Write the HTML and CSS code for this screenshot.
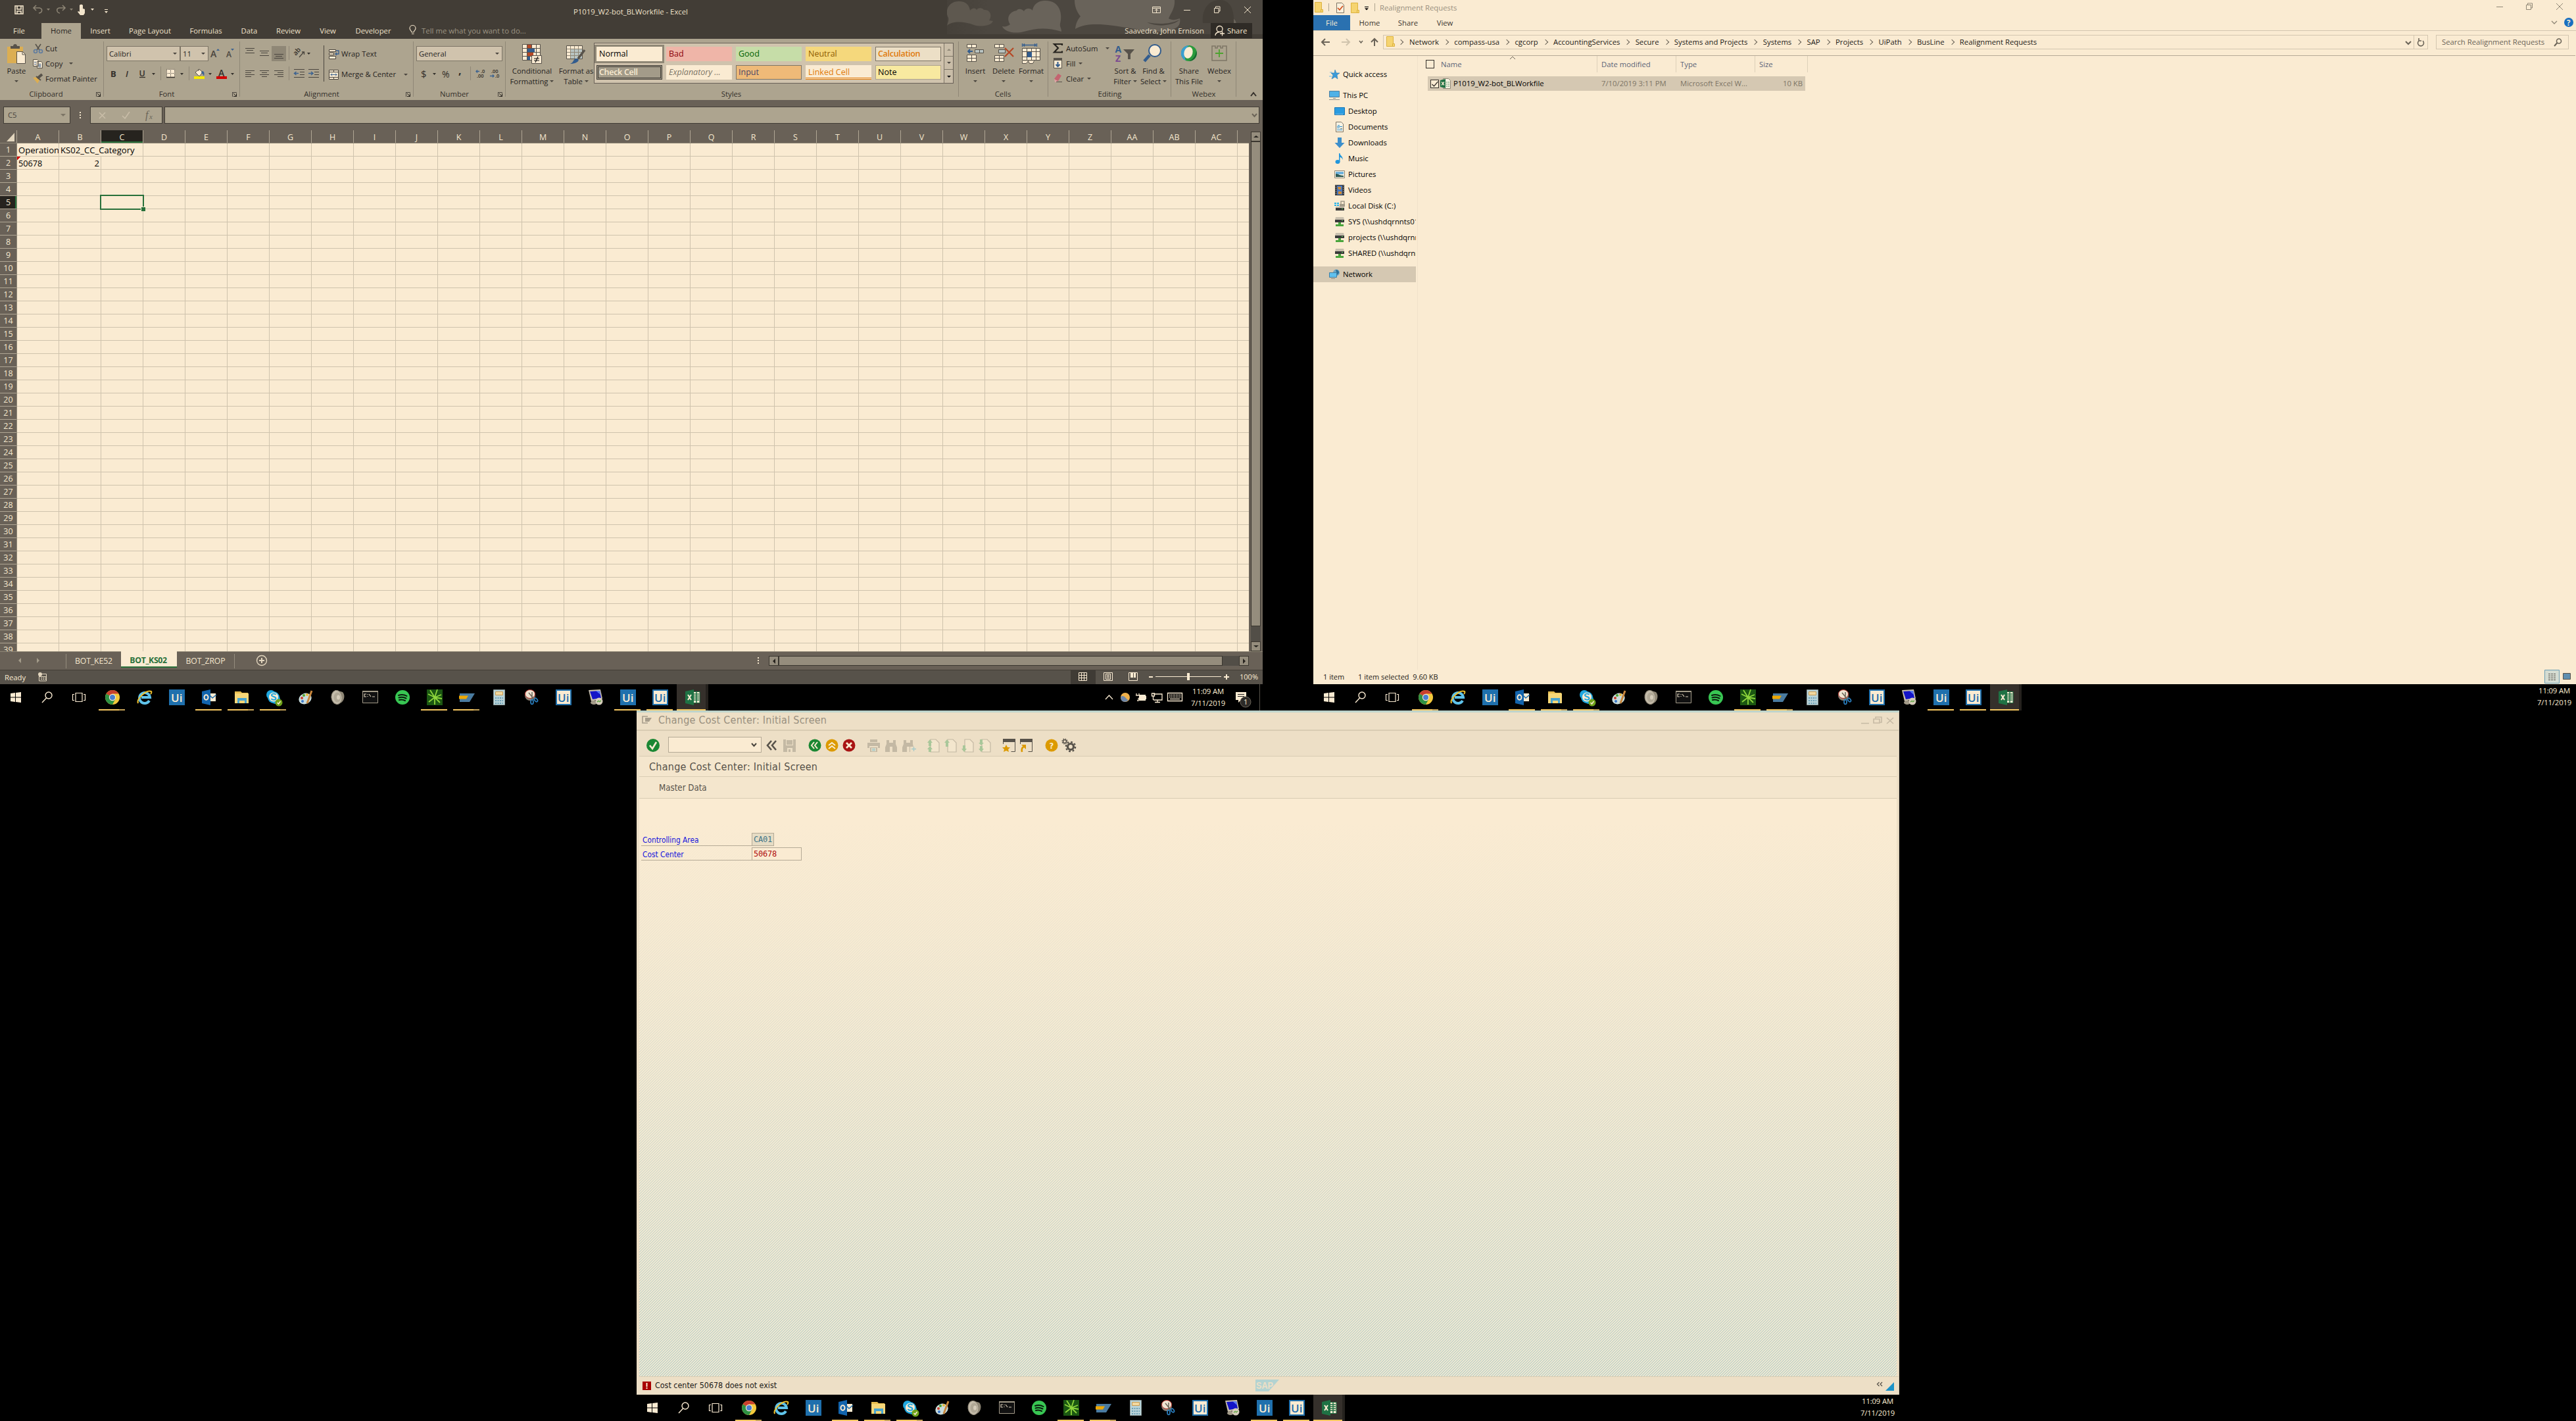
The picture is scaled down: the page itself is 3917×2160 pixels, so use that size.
FILE: index.html
```html
<!DOCTYPE html>
<html lang="en">
<head>
<meta charset="utf-8">
<title>Desktop</title>
<link rel="stylesheet" href="styles.css">
</head>
<body>
<main class="desk">

<!-- Excel -->
<section class="monitor mon-excel">
<div class="excel">
  <header class="xl-top">
    <svg class="xl-clouds" width="480" height="59" viewBox="1440 0 480 59">
      <defs><linearGradient id="cl" x1="0" x2="1"><stop offset="0" stop-color="#423d36"/><stop offset=".2" stop-color="#4c4740"/><stop offset="1" stop-color="#4c4740"/></linearGradient></defs>
      <path fill="url(#cl)" d="M1400 0h520v52h-520z"/>
      <g fill="#69635a">
        <path fill="#5e584f" d="M1440 39c1-5 3-7 2-12-6-10 0-25 16-25 11 0 16 6 17 14 3-4 8-5 10-1 3-4 9-3 11 0 10-1 13 9 8 16l6 1c-3 8-20 9-29 6-14-5-32-7-41 1z"/>
        <path d="M1524 40c3 8 18 12 33 8 18-5 34-7 57 0 0-5-3-8-2-12 4-14 0-35-22-35-14 0-19 8-20 15-4-5-11-3-13 1-4-4-9-4-11-1-12 2-16 12-10 21-4 3-8 4-12 3z"/>
        <path d="M1634 0h152c1 13-6 20-9 28 6 4 11 2 17 0 3 14-11 20-31 20-40 0-98-22-128-4 1-9 4-15 8-19-7-9-9-17-9-25z"/>
        <path d="M1856 36c2-8 8-10 12-10 8 0 11 5 12 10z"/>
      </g>
      <path d="M1744 34c18 3 34 3 50-4-10 9-34 12-50 4z" fill="#4c4740"/>
      <path d="M1829 35c-2-20 8-35 26-35 14 0 22 12 21 35z" fill="#443f38"/>
    </svg>
    <div class="xl-title">
      <svg width="180" height="30" viewBox="0 0 180 30" fill="none" stroke="#f3e5cc" stroke-width="1.6">
        <path d="M23 9h12v12H23zM26 9v5h6V9M26 21v-4h6v4"/>
        <g stroke="#8c8474"><path d="M51 12h9c5 1 5 7-1 8M55 8l-4 4 4 4M99 12h-9c-5 1-4 7 1 8M95 8l4 4-4 4"/></g>
        <path stroke="none" fill="#f3e5cc" d="M121 8a3 3 0 0 1 5 0v5l3 1v6l-2 3h-5l-4-5 1-1 2 1z"/>
        <path stroke="none" fill="#8c8474" d="M71 13h5l-2.500 3zM106 13h5l-2.500 3z"/>
        <path stroke="none" fill="#f3e5cc" d="M138 13h5l-2.500 3zM159 14h5v1h-5zM159 17h5l-2.500 3z"/>
      </svg>
      <span class="xl-name">P1019_W2-bot_BLWorkfile - Excel</span>
      <svg class="xl-win" width="180" height="30" viewBox="1740 0 180 30" fill="none" stroke="#f3e5cc" stroke-width="1">
        <path d="M1752.500 10.500h12v9h-12zM1752 12.500h12M1758.500 19v-5M1756 16l2.500-2 2.500 2M1800 15.500h10M1846.500 12.500h6.500v7h-6.500zM1848.500 12v-2h6.500v7h-2M1892 10l10 10M1902 10l-10 10"/>
      </svg>
    </div>
    <nav class="xl-tabs">
      <span>File</span><span class="on">Home</span><span>Insert</span><span>Page Layout</span><span>Formulas</span><span>Data</span><span>Review</span><span>View</span><span>Developer</span>
      <svg width="20" height="24" viewBox="0 0 20 24" fill="none" stroke="#e8dac2" stroke-width="1.200"><path d="M7 14c0-2-3-3-3-6a4.500 4.500 0 0 1 9 0c0 3-3 4-3 6zM7 16.500h3.500"/></svg>
      <span class="tell">Tell me what you want to do...</span>
      <span class="user">Saavedra, John Ernison</span>
      <span class="share"><svg width="16" height="18" viewBox="0 0 16 18" fill="none" stroke="#faebd2" stroke-width="1.300"><circle cx="7.500" cy="6" r="4.500"/><path d="M1 16c0-4 3-5 6-5.500M8 13h7M11.500 9.500v7"/></svg>Share</span>
    </nav>
  </header>

  <div class="ribbon">
    <div class="grp g-clip">
      <div class="big paste">
        <svg width="30" height="33" viewBox="12 66 30 33"><path fill="#dcae52" d="M13 71h24v25H13z"/><path fill="#57524a" d="M18 70h4c0-4 6-4 6 0h4v4H18z"/><path fill="#faebd2" stroke="#57524a" d="M27.500 78.500h9l4 4v14h-13z"/><path d="M36 78v5h5" fill="none" stroke="#57524a"/></svg>
        <b>Paste</b><i class="c"></i>
      </div>
      <div class="list">
        <span><svg width="16" height="16" fill="none" stroke="#57524a" stroke-width="1.600"><path d="M4 1l6 9M12 1L6 10"/><g stroke="#5d7ba0"><circle cx="4" cy="12" r="2.500"/><circle cx="12" cy="12" r="2.500"/></g></svg>Cut</span>
        <span><svg width="16" height="16" fill="#faebd2" stroke="#57524a"><path d="M.5 1.500h6l2 2v8h-8zM6.500 4.500h6l2 2v8h-8z"/><path stroke="#3b6291" d="M2 5.500h3M2 8.500h3M8.500 8.500h4M8.500 10.500h4M8.500 12.500h4"/></svg>Copy <i class="c"></i></span>
        <span><svg width="16" height="16"><path fill="#dcae52" d="M0 6l7-1 3 5-3 5z"/><path stroke="#57524a" stroke-width="4" d="M7 7l7-6"/><path stroke="#57524a" stroke-width="2" d="M5 4l7 6"/></svg>Format Painter</span>
      </div>
      <em>Clipboard</em><u class="ln"></u>
    </div>

    <div class="grp g-font">
      <div class="boxes"><span class="box b1">Calibri<i class="c"></i></span><span class="box b2">11<i class="c"></i></span>
        <svg width="42" height="24" viewBox="318 70 42 24" font-family="Open Sans, sans-serif" font-weight="600" fill="#4a453e"><text x="321" y="87" font-size="14">A</text><text x="345" y="87" font-size="12">A</text><path fill="#3b6291" d="M330 77l2.500-3 2.500 3zM352 74h5l-2.500 3z"/></svg></div>
      <svg class="r2" width="206" height="32" viewBox="158 98 206 32" font-family="Open Sans, sans-serif" fill="#332f2a">
        <text x="168" y="117" font-size="13" font-weight="700">B</text><text x="191" y="117" font-size="13" font-weight="600" font-style="italic">I</text><text x="211.500" y="116" font-size="12.500" font-weight="600">U</text><path d="M212 117.500h9" stroke="#332f2a" stroke-width="1.300"/>
        <path d="M231 111h5l-2.500 3zM274 111h5l-2.500 3zM317 111h5l-2.500 3zM351 111h5l-2.500 3z"/>
        <path d="M244.500 101v21M287.500 101v21" stroke="#8f8776"/>
        <path fill="#faebd2" d="M253 105h13v13h-13z"/><path fill="none" stroke="#332f2a" stroke-dasharray="1 1" d="M253.500 105v13M259.500 105v13M265.500 105v13M253 105.500h13M253 111.500h13"/><path d="M253 117.500h13" stroke="#332f2a" stroke-width="1.500"/>
        <path fill="#faebd2" stroke="#57524a" d="M297 110l6-5 5 5-5 6z"/><path d="M302 108v-3" stroke="#57524a"/><path fill="#3b6291" d="M307 108c4 0 4 4 3 8-1-3-2-4-4-5z"/><path fill="#f5ea00" d="M295 116h16v4h-16z"/>
        <text x="332" y="116" font-size="14" font-weight="600">A</text><path fill="#d20000" d="M329 116h16v4h-16z"/>
      </svg>
      <em>Font</em><u class="ln"></u>
    </div>

    <div class="grp g-align">
      <svg width="128" height="72" viewBox="365 59 128 72" fill="none" stroke="#4a453e" stroke-width="1">
        <path fill="#8f8776" stroke="none" d="M413 70h22v23h-22z"/>
        <path d="M373 73.500h14M375 76.500h10M373 80.500h14M395 77.500h14M397 80.500h10M395 84.500h14M417 82.500h14M419 85.500h10M417 88.500h14"/>
        <path d="M373 107.500h14M373 110.500h9M373 113.500h14M373 116.500h9M395 107.500h14M398 110.500h8M395 113.500h14M398 116.500h8M417 107.500h14M422 110.500h9M417 113.500h14M422 116.500h9"/>
        <path stroke="#8f8776" d="M439.500 70v21M439.500 101v21"/><path d="M492.500 69v55"/>
        <path stroke-width="1.300" d="M455 87l7-8M459 79h3.500v4"/><text x="0" y="0" transform="translate(450 85) rotate(-50)" font-size="10" font-family="Open Sans, sans-serif" font-weight="600" fill="#332f2a" stroke="none">ab</text>
        <path fill="#332f2a" stroke="none" d="M467 80h5l-2.500 3z"/>
        <path d="M447 105.500h16M456 109.500h7M456 113.500h7M447 117.500h16M469 105.500h16M478 109.500h7M478 113.500h7M469 117.500h16"/>
        <path stroke="#3b6291" stroke-width="1.500" d="M454 111.500h-6M450.500 109l-3 2.500 3 2.500M469 111.500h7M473 109l3 2.500-3 2.500"/>
      </svg>
      <div class="list wide">
        <span><svg width="17" height="17" fill="#faebd2" stroke="#4a453e"><path d="M.5 1.500h10v3H.500zM.5 6.500h7v3h-7zM.5 11.500h10v4H.500z"/><path fill="none" stroke="#3b6291" stroke-width="1.300" d="M11 3h4v5h-5M12 6l-2 2 2 2"/></svg>Wrap Text</span>
        <span><svg width="17" height="17" fill="#faebd2" stroke="#4a453e"><path d="M.5 1.500h14v14H.500zM.5 4.500h14M.5 12.500h14M7.500 1v3M7.500 13v3"/><path fill="none" stroke="#3b6291" d="M3 8.500h9M5 6.500l-2 2 2 2M10 6.500l2 2-2 2"/></svg>Merge &amp; Center<i class="c"></i></span>
      </div>
      <em>Alignment</em><u class="ln"></u>
    </div>

    <div class="grp g-num">
      <div class="boxes"><span class="box b3">General<i class="c"></i></span></div>
      <svg class="r2" width="138" height="32" viewBox="629 98 138 32" font-family="Open Sans, sans-serif" fill="#332f2a">
        <text x="640" y="118" font-size="15">$</text><path d="M658 111h5l-2.500 3z"/><text x="672" y="118" font-size="14">%</text><text x="697" y="113" font-size="16" font-weight="700">,</text>
        <path d="M715.500 101v21" stroke="#8f8776"/>
        <g font-size="7.500" font-weight="600"><text x="731" y="111">.0</text><text x="725" y="118">.00</text><text x="747" y="111">.00</text><text x="753" y="118">.0</text></g>
        <path fill="none" stroke="#3b6291" stroke-width="1.300" d="M729 108.500h-5M726 106.500l-2 2 2 2M745 115.500h6M749 113.500l2 2-2 2"/>
      </svg>
      <em>Number</em><u class="ln"></u>
    </div>

    <div class="grp g-styles">
      <div class="big w80"><svg width="32" height="33" viewBox="794 66 32 33"><path fill="#faebd2" stroke="#57524a" d="M795.500 67.500h27v24h-27zM802.500 67v24M809.500 67v24M816.500 67v24M795 73.500h27M795 79.500h27M795 85.500h27"/><path fill="#b54826" d="M803 68h6v5h-6zM803 80h9v5h-9z"/><path fill="#325c8e" d="M803 74h11v5h-11zM803 86h4v5h-4z"/><path fill="#faebd2" stroke="#57524a" d="M809.500 84.500h15v12h-15z"/><path stroke="#111" stroke-width="1.200" d="M813 89h8M813 92h8M819 86l-4 9"/></svg><b>Conditional<br>Formatting<i class="c in"></i></b></div>
      <div class="big w54"><svg width="32" height="33" viewBox="859 66 32 33"><path fill="#faebd2" stroke="#57524a" d="M860.500 69.500h24v20h-24z"/><path fill="#b9c4c2" d="M867 75h17v14h-17z"/><path fill="none" stroke="#8f8776" d="M866.500 70v19M872.500 70v19M878.500 70v19M861 74.500h23M861 79.500h23M861 84.500h23"/><path stroke="#57524a" stroke-width="3.500" d="M888 76l-10 13"/><path fill="#325c8e" d="M866 97c6-2 4-8 10-8 6 1 2 8-10 8z"/></svg><b>Format as<br>Table<i class="c in"></i></b></div>
      <div class="gallery">
        <div class="tiles">
          <span class="t normal">Normal</span><span class="t bad">Bad</span><span class="t good">Good</span><span class="t neutral">Neutral</span><span class="t calc">Calculation</span>
          <span class="t check">Check Cell</span><span class="t expl">Explanatory ...</span><span class="t input">Input</span><span class="t linked">Linked Cell</span><span class="t note">Note</span>
        </div>
        <div class="gscroll"><span><i class="c upc"></i></span><span><i class="c"></i></span><span class="more"><i class="c"></i></span></div>
      </div>
      <em>Styles</em>
    </div>

    <div class="grp g-cells">
      <div class="big w48"><svg width="32" height="33" viewBox="1467 66 32 33" fill="#faebd2" stroke="#57524a"><path d="M1470.500 67.500h14v5h-14zM1477.500 67v6M1470.500 83.500h14v10h-14zM1477.500 83v11M1470 88.500h14"/><path fill="#b9c4c2" d="M1482.500 75.500h13v5h-13zM1489.500 75v6"/><path fill="none" stroke="#325c8e" stroke-width="1.800" d="M1479 78h-7M1475 75l-3 3 3 3"/></svg><b>Insert</b><i class="c"></i></div>
      <div class="big w38"><svg width="32" height="33" viewBox="1509 66 32 33" fill="#faebd2" stroke="#57524a"><path d="M1511.500 67.500h14v5h-14zM1518.500 67v6M1511.500 84.500h14v9h-14zM1518.500 84v10M1511 88.500h14"/><path fill="#b9c4c2" d="M1517.500 75.500h10v5h-10z"/><path fill="none" stroke="#b54826" stroke-width="2.200" d="M1527 73l13 13M1540 73l-13 13"/></svg><b>Delete</b><i class="c"></i></div>
      <div class="big w46"><svg width="32" height="33" viewBox="1551 66 32 33" fill="#faebd2" stroke="#57524a"><path d="M1553.500 73.500h27v18h-27zM1560.500 73v18M1567.500 73v18M1574.500 73v18M1553 78.500h27M1553 86.500h27M1553.500 92.500v4h6l3-4 2 4h5l2-4"/><path fill="#325c8e" stroke="none" d="M1561 79h7v8h-7z"/><path fill="none" stroke="#325c8e" stroke-width="1.300" d="M1553.500 66v5M1575.500 66v5M1555 68.500h19M1557 66.500l-2 2 2 2M1572 66.500l2 2-2 2"/></svg><b>Format</b><i class="c"></i></div>
      <em>Cells</em>
    </div>

    <div class="grp g-edit">
      <div class="list">
        <span><svg width="17" height="17"><path fill="none" stroke="#26231e" stroke-width="2.200" d="M14 4V2H2l6 6-6 6.500h12v-2"/></svg>AutoSum<i class="c ml"></i></span>
        <span><svg width="17" height="17"><path fill="#faebd2" stroke="#57524a" d="M1.500.5h12v15h-12z"/><path fill="#57524a" d="M1 0h13v4H1z"/><path fill="none" stroke="#325c8e" stroke-width="2" d="M7.500 6v7M4.500 10l3 3 3-3"/></svg>Fill<i class="c in"></i></span>
        <span><svg width="17" height="17"><path fill="#c46470" d="M2 9l6-8 5 3-5 8-3 1z"/><path fill="#d9a3a3" d="M2 9l5 3-2 2H3z"/><path stroke="#57524a" d="M5 13.500h9"/></svg>Clear<i class="c in"></i></span>
      </div>
      <div class="big w44"><svg width="32" height="33" viewBox="1695 66 32 33" font-family="Open Sans, sans-serif" font-size="14" font-weight="700"><text x="1695.500" y="80" fill="#325c8e">A</text><text x="1696" y="94" fill="#7b4a91">Z</text><path fill="#57524a" d="M1708 75h17l-6 7v8h-4v-8z"/></svg><b>Sort &amp;<br>Filter<i class="c in"></i></b></div>
      <div class="big w42"><svg width="32" height="33" viewBox="1739 66 32 33"><path stroke="#325c8e" stroke-width="4.500" d="M1741 93l8-9"/><circle cx="1757" cy="77" r="9" fill="#faebd2" stroke="#325c8e" stroke-width="2"/></svg><b>Find &amp;<br>Select<i class="c in"></i></b></div>
      <em>Editing</em>
    </div>

    <div class="grp g-webex">
      <div class="big w54"><svg width="32" height="33" viewBox="1793 66 32 33"><ellipse cx="1809" cy="81" rx="12" ry="12" fill="#2a9a3c"/><path fill="#3a9fd0" d="M1809 69a12 12 0 0 0-5 23c-4-10 0-19 5-23z"/><path fill="#176030" d="M1809 93a12 12 0 0 0 11-16c-1 9-5 13-11 16z"/><ellipse cx="1808" cy="80" rx="6.500" ry="9" fill="#faebd2" transform="rotate(15 1808 80)"/></svg><b>Share<br>This File</b></div>
      <div class="big w38"><svg width="32" height="33" viewBox="1838 66 32 33"><path fill="none" stroke="#7d7566" stroke-width="1.500" d="M1843 70h5v3h3v-3h5v3h3v-3h6v22h-22z"/><path stroke="#4da32f" stroke-width="1.800" d="M1848 81h12M1854 75v12"/></svg><b>Webex</b><i class="c"></i></div>
      <em>Webex</em>
    </div>
    <svg class="fold" width="40" height="93" viewBox="1880 59 40 93"><path fill="none" stroke="#332f2a" stroke-width="2" d="M1902 146l4-5 4 5"/></svg>
  </div>

  <div class="fx">
    <span class="nm">C5<i class="c"></i></span>
    <svg width="30" height="26"><path fill="#f3e5cc" d="M14 8h2v2h-2zM14 12h2v2h-2zM14 16h2v2h-2z"/></svg>
    <span class="fxb"><svg width="108" height="24" fill="none" stroke="#c9bda8" stroke-width="1.600"><path d="M13 8l9 9M22 8l-9 9M48 13l4 4 7-10"/><text x="83" y="17" fill="#6b6458" stroke="none" font-family="Liberation Serif, serif" font-style="italic" font-size="16">f</text><text x="89" y="18" fill="#6b6458" stroke="none" font-family="Liberation Serif, serif" font-style="italic" font-size="11">x</text></svg></span>
    <span class="bar"><svg width="12" height="12" fill="none" stroke="#6b6458" stroke-width="2"><path d="M2 4l3.500 4 3.500-4"/></svg></span>
  </div>

  <div class="sheet">
    <div class="sheet-main">
      <div class="cols" id="cols"><span class="corner"><svg width="25" height="20"><path fill="#e3d6be" d="M22 4v13H10z"/></svg></span></div>
      <div class="sheet-body">
        <div class="rows" id="rows"></div>
        <div class="cells">
          <div class="row"><span class="cell clip">Operation</span><span class="cell span2">KS02_CC_Category</span></div>
          <div class="row"><span class="cell noted">50678</span><span class="cell num">2</span></div>
          <i class="sel"></i>
        </div>
      </div>
    </div>
    <div class="vs"><span class="sb"><i class="c upc"></i></span><span class="thumb"></span><span class="track"></span><span class="sb"><i class="c"></i></span></div>
  </div>

  <div class="tabs">
    <svg width="100" height="26"><path fill="#a39b89" d="M32 9v8l-4-4zM56 9v8l4-4z"/></svg>
    <span>BOT_KE52</span><span class="act">BOT_KS02</span><span class="z">BOT_ZROP</span>
    <svg class="plus" width="20" height="20" fill="none" stroke="#e3d6be" stroke-width="1.400"><circle cx="10" cy="10" r="7.500"/><path stroke-width="2" d="M10 6v8M6 10h8"/></svg>
    <svg class="dots" width="4" height="12"><path fill="#f3e5cc" d="M1 0h2v2H1zM1 4h2v2H1zM1 8h2v2H1z"/></svg>
    <div class="hs"><span class="sb"><i class="c lf"></i></span><span class="thumb"></span><span class="track"></span><span class="sb"><i class="c rt"></i></span></div>
  </div>
  <div class="status">
    <span>Ready</span>
    <svg width="14" height="14"><path fill="none" stroke="#e3d6be" d="M1.500 5v8h11V2.500H6M2 6.500h10M4 8.500h2m1 0h2m1 0h2M4 10.500h2m1 0h2m1 0h2"/><circle cx="3" cy="3" r="3" fill="#e3d6be"/></svg>
    <svg class="views" width="292" height="21" viewBox="1628 1019 292 21" fill="none" stroke="#faebd2">
      <path fill="#3f3b35" stroke="none" d="M1628 1019h38v21h-38z"/>
      <path d="M1640.500 1022.500h12v12h-12zM1644.500 1022v12M1648.500 1022v12M1640 1026.500h12M1640 1030.500h12M1678.500 1022.500h13v12h-13zM1681.500 1024.500h7v8h-7zM1683 1026.500h4M1683 1028.500h4M1683 1030.500h4M1716.500 1022.500h13v12h-13z"/>
      <path fill="#faebd2" stroke="none" d="M1719 1022h4v8h-4zM1724 1022h3v8h-3zM1747 1028h6v2h-6zM1757 1028h100v1h-100zM1805 1023h4v11h-4zM1861 1028h8v2h-8zM1864 1025h2v8h-2z"/>
      <text x="1885" y="1032.500" fill="#faebd2" stroke="none" font-family="Open Sans, sans-serif" font-size="11" textLength="28" lengthAdjust="spacingAndGlyphs">100%</text>
    </svg>
  </div>
</div>
<div class="taskbar" data-tray="full"></div>
</section>

<!-- File Explorer -->
<section class="monitor mon-files">
<div class="files">
  <div class="f-title">
    <svg width="96" height="23" viewBox="0 0 96 23"><g fill="#f6d470" stroke="#dcb23f"><path d="M2.500 3.500h10v15h-10zM57.500 4.500h10v15h-10z"/><path d="M11.500 14.500h3v4h-3zM66.500 15.500h3v4h-3z"/></g><path stroke="#aea48f" d="M23.500 5v12M93.500 5v12"/><path fill="#faf0dc" stroke="#7d7566" d="M35.500 4.500h8l3 3v12h-11z"/><path fill="none" stroke="#d2501e" stroke-width="1.700" d="M37 12l3 3 5-6"/><path d="M78 10h6v1h-6zM78 12.500h6l-3 3z"/></svg>
    <span>Realignment Requests</span>
    <svg class="right" width="130" height="23" viewBox="1790 0 130 23" fill="none" stroke="#8f8776"><path d="M1799 10.500h10M1844.500 7.500h7v7h-7zM1846.500 7v-2h7v7h-2M1890 5l10 10M1900 5l-10 10"/></svg>
  </div>
  <div class="f-tabs"><span class="file">File</span><span>Home</span><span class="sh">Share</span><span class="vw">View</span>
    <svg class="right" width="50" height="23" viewBox="1870 23 50 23" fill="none" stroke="#8f8776" stroke-width="1.300"><path d="M1883 32l4 4 4-4"/><circle cx="1909" cy="34" r="7" fill="#1a6fc0" stroke="none"/><text x="1906" y="38.500" fill="#faebd2" stroke="none" font-family="Open Sans, sans-serif" font-size="11.500" font-weight="700">?</text></svg></div>
  <div class="f-nav">
    <svg width="106" height="36" viewBox="0 47 106 36" fill="none" stroke="#6b6458" stroke-width="2"><path d="M13 64h12M18 59l-5 5 5 5M93 70V59M88 64l5-5 5 5"/><path stroke-width="1.500" d="M70 62l2.500 3 2.500-3"/><path stroke="#d0c4ad" d="M43 64h12M50 59l5 5-5 5"/></svg>
    <div class="addr">
      <svg width="22" height="20"><g fill="#f6d470" stroke="#dcb23f"><path d="M4.500 1.500h10v15h-10z"/><path d="M13.500 12.500h3v4h-3z"/></g></svg>
      <ol id="crumbs"><li class="w0"></li><li>Network</li><li>compass-usa</li><li>cgcorp</li><li>AccountingServices</li><li>Secure</li><li>Systems and Projects</li><li>Systems</li><li>SAP</li><li>Projects</li><li>UiPath</li><li>BusLine</li><li>Realignment Requests</li></ol>
      <svg class="right" width="38" height="20" fill="none" stroke="#6b6458" stroke-width="2"><path d="M5 9l4 4 4-4"/><path stroke="#d3c6b0" stroke-width="1" d="M17.500 0v20"/><path stroke-width="1.600" d="M25 8a4.500 4.500 0 1 0 6 0M25 4v4h4"/></svg>
    </div>
    <div class="search"><span>Search Realignment Requests</span><svg width="14" height="14" fill="none" stroke="#6b6458" stroke-width="1.600"><circle cx="8" cy="5.500" r="3.500"/><path stroke-width="2" d="M5.500 8L1 13"/></svg></div>
  </div>
  <div class="f-main">
    <aside class="tree">
      <div class="gap"><svg width="16" height="16"><path fill="#3b9bd8" stroke="#2b7cb5" stroke-width=".6" d="M9 1l2 5h5l-4 3 1 6-4-3-5 3 2-6-3-3h5z"/><path stroke="#6fb7e2" d="M1 5h4M0 11h4"/></svg>Quick access</div>
      <div class="gap2"><svg width="16" height="16"><path fill="#4fb1e6" stroke="#4f7f9f" d="M.5 1.500h15v9H.500z"/><path fill="#8f8f88" d="M6 12h4v1H6zM0 14h16v1H0z"/></svg>This PC</div>
      <div class="k"><svg width="16" height="16"><path fill="#2a9be0" stroke="#1676b8" d="M.5 2.500h15v11H.500z"/><path stroke="#cfe6ef" stroke-dasharray="1 1" d="M2 12.500h12"/></svg>Desktop</div>
      <div class="k"><svg width="16" height="16"><path fill="#faf3e2" stroke="#7d7566" d="M2.500.5h8l3 3v12h-11z"/><path stroke="#2a8fd0" d="M5 5.500h3M4 7.500h8M4 9.500h4M4 12.500h8"/><path stroke="#5c7f8a" d="M9 10.500h3"/></svg>Documents</div>
      <div class="k"><svg width="16" height="16"><path fill="#3d8fcb" d="M5 0h6v8h4.500L8 16 .5 8H5z"/></svg>Downloads</div>
      <div class="k"><svg width="16" height="16"><ellipse cx="5" cy="13" rx="3.500" ry="3" fill="#2196dc"/><path fill="#2196dc" d="M7 0h1.500c0 4 5 4 4 10-1-3-2-4-4-4v7H7z"/></svg>Music</div>
      <div class="k"><svg width="16" height="16"><path fill="#faf3e2" stroke="#8f8776" d="M.5 2.500h15v11H.500z"/><path fill="#6fb2dd" d="M2 4h12v4H2z"/><path fill="#2e5a55" d="M2 7c4 0 5 3 12 3v2H2z"/></svg>Pictures</div>
      <div class="k"><svg width="16" height="16"><path fill="#333" d="M1 0h14v16H1z"/><path fill="#4a78c0" d="M4 1h8v14H4z"/><path fill="#d08a30" d="M5 3h5v4H6zM6 10h5v4H6z"/><path stroke="#ddd" stroke-dasharray="1 2" d="M2.500 1v15M13.500 1v15"/></svg>Videos</div>
      <div class="k"><svg width="16" height="16"><path fill="#1fb0e8" d="M0 3h3v2H0zM4 3h3v2H4zM0 6h3v2H0zM4 6h3v2H4z"/><path fill="none" stroke="#a39b89" stroke-width="1.500" d="M10 5V1h5v4"/><path fill="#a39b89" d="M8 5h8v4H8z"/><path fill="#c9c0ae" d="M2 9h13v3H2z"/><path fill="#3a3a3a" d="M2 11h13v4H2z"/><path fill="#5ad05a" d="M11 12h2v1h-2z"/></svg>Local Disk (C:)</div>
      <div class="k"><svg width="16" height="16"><use href="#netdrive"/></svg>SYS (\\ushdqrnnts01)</div>
      <div class="k"><svg width="16" height="16"><use href="#netdrive"/></svg>projects (\\ushdqrnnts01)</div>
      <div class="k"><svg width="16" height="16"><use href="#netdrive"/></svg>SHARED (\\ushdqrnnts01)</div>
      <div class="gap2 on"><svg width="16" height="16"><circle cx="11" cy="5.500" r="5" fill="#6da6c4"/><path fill="#2d6f97" d="M10 1c3 0 5 2 5 5l-3 3z"/><path fill="#5fc0ee" stroke="#3e7fa5" d="M.5 5.500h11v7H.500z"/><path fill="#8f8f88" d="M3 14h6v1H3z"/></svg>Network</div>
    </aside>
    <div class="flist">
      <div class="fh"><span class="ck"></span><span class="h1">Name<svg width="10" height="6" fill="none" stroke="#6b6458"><path d="M1 5l4-4 4 4"/></svg></span><span>Date modified</span><span>Type</span><span class="h4">Size</span></div>
      <div class="fr"><span class="ck"><svg width="12" height="12" fill="none" stroke="#332f2a" stroke-width="1.200"><path d="M1.500 6l3 3 6-7"/></svg></span><svg width="18" height="18"><path fill="#faf3e2" stroke="#8f8776" d="M5.500 1.500h8l3 3v12h-11z"/><path stroke="#7fb08a" stroke-width="1.500" stroke-dasharray="2 1" d="M10 7h5M10 10h5M10 13h5"/><path fill="#1f7244" d="M1 4l8-2v14l-8-2z"/><path stroke="#faebd2" stroke-width="1.300" d="M3 6.500l4 5M7 6.500l-4 5"/></svg><span class="n">P1019_W2-bot_BLWorkfile</span><span class="d">7/10/2019 3:11 PM</span><span class="ty">Microsoft Excel W...</span><span class="sz">10 KB</span></div>
    </div>
  </div>
  <div class="f-status"><span>1 item</span><span>1 item selected&nbsp; 9.60 KB</span>
    <svg class="right" width="50" height="22" viewBox="1870 1018 50 22"><path fill="#d5dcd2" stroke="#6b9fb5" d="M1872.500 1018.500h22v20h-22z"/><path stroke="#57524a" stroke-dasharray="3 1" d="M1878 1024.500h11M1878 1027.500h11M1878 1030.500h11M1878 1033.500h11"/><path fill="#5f8fb0" stroke="#57524a" d="M1900.500 1023.500h11v9h-11z"/></svg></div>
</div>
<div class="taskbar" data-tray="clock"></div>
</section>

<!-- SAP GUI -->
<section class="monitor mon-sap">
<div class="sap">
  <div class="s-title">
    <svg width="33" height="26" viewBox="0 3 33 26"><path fill="none" stroke="#a89e8c" stroke-width="1.600" d="M17 9H9v10h8"/><path fill="#a89e8c" d="M13 11h10l-4 6h-6z"/></svg>
    <span>Change Cost Center: Initial Screen</span>
    <svg class="right" width="70" height="26" viewBox="1850 3 70 26" fill="none" stroke="#c6baa4" stroke-width="1.600"><path d="M1863 19.500h12M1882 13h9v6h-9zM1885 12v-2h9v8h-2M1902 11l10 9M1912 11l-10 9"/></svg>
  </div>
  <div class="s-tool">
    <svg width="44" height="38" viewBox="4 31 44 38"><circle cx="25" cy="53" r="10" fill="#1b8733"/><path fill="none" stroke="#faebd2" stroke-width="2.600" d="M20 53l4 5 6-10"/></svg>
    <span class="combo"><svg width="12" height="12" fill="none" stroke="#4a453e" stroke-width="2"><path d="M2 4l3.500 4 3.500-4"/></svg></span>
    <svg width="490" height="38" viewBox="190 31 490 38" fill="none">
      <path stroke="#57524a" stroke-width="2.600" d="M205 46l-6 7 6 7M212 46l-6 7 6 7"/>
      <path fill="#c4b9a4" d="M223 44h19v19h-19z"/><path fill="#eddfc6" d="M227 44h11v9h-11zM229 57h8v6h-8z"/><path fill="#c4b9a4" d="M228 45h9v7h-9zM231 59h3v4h-3z"/>
      <circle cx="271" cy="53" r="9.500" fill="#1b8733"/><path stroke="#faebd2" stroke-width="2" d="M270 48l-4 5 4 5M275 48l-4 5 4 5"/>
      <circle cx="297" cy="53" r="9.500" fill="#dc9a00"/><path stroke="#faebd2" stroke-width="2" d="M292 53l5-4 5 4M292 58l5-4 5 4"/>
      <circle cx="323" cy="53" r="9.500" fill="#a81414"/><path stroke="#faebd2" stroke-width="2.800" d="M319 49l8 8M327 49l-8 8"/>
      <g fill="#c4b9a4"><path d="M355 44h11v4h-11zM351 49h19v8h-3v-3h-13v3h-3zM355 56h11v7h-11z"/><path d="M380 45h4v4h6v-4h4v6l2 5v7h-7v-8h-4v8h-7v-7l2-5zM406 45h4v4h6v-4h4v6l1 4h-5v8h-1v-8h-4v8h-7v-7l2-5z"/></g>
      <path fill="#eddfc6" d="M357 57h7v5h-7z"/><path stroke="#a5c9ca" d="M358 58.500h5M358 60.500h5M421.500 55v7M418 58.500h7" stroke-width="1.300"/>
      <g stroke="#c4b9a4" stroke-width="1.200" fill="#f3e6cd"><path d="M447 44h8l5 5v14h-13zM473 44h8l5 5v14h-13zM499 44h8l5 5v14h-13zM525 44h8l5 5v14h-13z"/></g>
      <g fill="#a9c79a"><path d="M446 44l4 5h-2v5h-4v-5h-2zM446 54l4 5h-2v4h-4v-4h-2zM472 44l4 5h-2v6h-4v-6h-2zM498 63l4-5h-2v-5h-4v5h-2zM524 53l4-4h-2v-5h-4v5h-2zM524 63l4-5h-2v-4h-4v4h-2z"/></g>
      <g fill="#57524a"><path d="M557 43h19v5h-19zM583 43h19v5h-19z"/></g><path stroke="#57524a" d="M557.500 48v3M575.500 48v14.500h-6M583.500 48v3M601.500 48v14.500h-6"/>
      <path fill="#dc9a00" d="M562 52l2 4h4l-3 3 1 4-4-2-4 2 1-4-3-3h4z"/><path stroke="#dc9a00" stroke-width="2.600" d="M586 63c-1-5 0-7 3-8"/><path fill="#dc9a00" d="M585 52h7v7z"/>
      <circle cx="631" cy="53" r="9.500" fill="#dc9a00"/><text x="627.500" y="58" font-family="DejaVu Sans" font-size="13" font-weight="700" fill="#faebd2">?</text>
      <circle cx="660" cy="55" r="4.500" stroke="#57524a" stroke-width="3.200"/><circle cx="660" cy="55" r="7.200" stroke="#57524a" stroke-width="2.200" stroke-dasharray="2.800 2.850"/><circle cx="651" cy="47" r="2.500" stroke="#57524a" stroke-width="1.500"/><circle cx="651" cy="47" r="4" stroke="#57524a" stroke-width="1.200" stroke-dasharray="1.600 1.540"/>
    </svg>
  </div>
  <div class="s-head">Change Cost Center: Initial Screen</div>
  <div class="s-menu">Master Data</div>
  <div class="s-body">
    <label class="fld"><span>Controlling Area</span><b class="ro">CA01</b></label>
    <label class="fld"><span>Cost Center</span><b>50678</b></label>
  </div>
  <div class="s-status">
    <svg width="13" height="13"><path fill="#a80000" d="M0 0h13v13H0z"/><path fill="#faebd2" d="M5.500 2h2v6h-2zM5.500 9h2v2h-2z"/></svg><span>Cost center 50678 does not exist</span>
    <svg class="logo" width="36" height="18"><path fill="#b3d3d1" d="M0 0h36L20 18H0z"/><text x="1" y="14" font-family="Liberation Sans" font-weight="700" font-size="14" fill="#eddfc6" textLength="26" lengthAdjust="spacingAndGlyphs">SAP</text></svg>
    <svg class="right" width="34" height="20" viewBox="1882 1018 34 20"><path fill="none" stroke="#57524a" stroke-width="1.300" d="M1889.500 1023l-3 3 3 3M1894 1023l-3 3 3 3"/><path fill="#1d93c8" d="M1912 1023v13h-13z"/></svg>
  </div>
</div>
<div class="taskbar" data-tray="clock"></div>
</section>
</main>

<svg width="0" height="0" class="defs"><defs>
  <g id="netdrive"><path fill="#c9c0ae" d="M2 1h12l1 4H1z"/><path fill="#3a3a3a" d="M1 5h14v4H1z"/><path fill="#5ad05a" d="M11 6h2v1h-2z"/><path fill="#4aa53c" d="M6 9h4v3h4v3H2v-3h4z"/></g>
</defs></svg>

<template id="tb">
  <div class="ic s"><svg width="24" height="24"><path fill="#faebd2" d="M4 6l7-1v6.500H4zM12 5l8-1v7.500h-8zM4 12.500h7V19l-7-1zM12 12.500h8V20l-8-1z"/></svg></div>
  <div class="ic s"><svg width="24" height="24" fill="none" stroke="#faebd2" stroke-width="1.400"><circle cx="14" cy="9" r="5"/><path d="M10.500 13L4 20"/></svg></div>
  <div class="ic s"><svg width="24" height="24" fill="none" stroke="#faebd2" stroke-width="1.200"><path d="M7 5.500h10v13H7zM5 7.500H2.500v9H5M19 7.500h2.500v9H19"/></svg></div>
  <div class="ic two first"><svg width="24" height="24"><circle cx="12" cy="12" r="11" fill="#f3c93c"/><path fill="#c8402f" d="M12 12L2.500 6.500A11 11 0 0 1 21.500 6.500H12z"/><path fill="#2d9144" d="M2.500 6.500A11 11 0 0 0 12 23l4.500-8.500L12 12z"/><circle cx="12" cy="12" r="5.200" fill="#faebd2"/><circle cx="12" cy="12" r="4" fill="#4a7fd0"/></svg></div>
  <div class="ic"><svg width="24" height="24" fill="none"><path stroke="#5fc3ea" stroke-width="4" d="M19 17a8 8 0 1 1 1-5H7"/><path stroke="#efc02c" stroke-width="2" d="M2 21C-1 15 14 0 22 3c1 1 0 3-1 4"/></svg></div>
  <div class="ic"><svg width="24" height="24"><path fill="#1f70ad" d="M0 0h24v24H0z"/><text x="3" y="18.500" class="ui" fill="#faebd2">Ui</text></svg></div>
  <div class="ic one"><svg width="24" height="24"><path fill="#faebd2" d="M12 6h10v12H12z"/><path fill="none" stroke="#1f70ad" stroke-width="1.500" d="M13 9l4 4 6-5"/><path fill="#1264ad" d="M1 3l13-3v24L1 21z"/><ellipse cx="7.500" cy="12" rx="3" ry="3.800" fill="none" stroke="#faebd2" stroke-width="2"/></svg></div>
  <div class="ic two"><svg width="24" height="24"><path fill="#e7bd4f" d="M2 3h9l2 2h9v4H2z"/><path fill="#f6d778" d="M2 6h21v15H2z"/><path fill="#4aa5cf" d="M6 13h14v8h-3v-4H9v4H6z"/></svg></div>
  <div class="ic two"><svg width="24" height="24"><circle cx="8" cy="8" r="7" fill="#1fa7df"/><circle cx="15" cy="15" r="7" fill="#1fa7df"/><circle cx="12" cy="12" r="9" fill="#1fa7df"/><circle cx="12" cy="11.500" r="7" fill="#faebd2"/><path fill="none" stroke="#1fa7df" stroke-width="2" d="M15.500 8c-2-2.500-7-1.500-6.500 1 .5 2.500 6 1.500 6.500 4.500 0 3-5.500 3-7 .5"/><circle cx="20" cy="20" r="5.500" fill="#6fa31a"/><path fill="none" stroke="#faebd2" stroke-width="1.500" d="M17.500 20l2 2 3-4"/></svg></div>
  <div class="ic"><svg width="24" height="24"><ellipse cx="11" cy="14" rx="10" ry="8" fill="#c9dcdc" transform="rotate(-25 11 14)"/><circle cx="6" cy="13" r="2" fill="#c8402f"/><circle cx="9" cy="9" r="2" fill="#4da32f"/><circle cx="14" cy="8" r="2" fill="#e8b93c"/><circle cx="7" cy="18" r="2" fill="#3c78c8"/><path stroke="#c8863c" stroke-width="3" d="M21 2l-7 19"/></svg></div>
  <div class="ic"><svg width="24" height="24"><path fill="#8f8776" d="M9 1l10 3c4 4 3 12-2 16l-8 3z"/><ellipse cx="10" cy="12" rx="8" ry="10.500" fill="#c4bcab" stroke="#8f8776" transform="rotate(-8 10 12)"/><ellipse cx="11" cy="12" rx="5.500" ry="7.500" fill="#b0a896"/><ellipse cx="12.500" cy="12" rx="2.500" ry="3.500" fill="#d5ccba"/></svg></div>
  <div class="ic"><svg width="24" height="24"><path fill="#111" stroke="#a39b89" d="M.5 2.500h23v18H.500z"/><path fill="#a39b89" d="M0 2h24v2H0z"/><path fill="none" stroke="#d8ccb6" stroke-width="1.200" d="M6 7H3v4h3M8 7v1M8 10v1M10 7l3 4M15 11h4"/></svg></div>
  <div class="ic"><svg width="24" height="24"><circle cx="12" cy="12" r="11" fill="#38c653"/><path fill="none" stroke="#0a1a0c" stroke-width="2" stroke-linecap="round" d="M6 9c4-1.500 9-1 12.500 1M6.500 12.500c3.500-1 7.500-.8 11 1M7 16c3-.8 6-.5 9 1"/></svg></div>
  <div class="ic one"><svg width="24" height="24"><path fill="#1b5712" d="M0 0h24v24H0z"/><path stroke="#8ed63c" stroke-width="1.800" d="M12 12l4-12M12 12L2 7M12 12l10-4M12 12L3 19M12 12v11M12 12l8 8M12 12L5 1M12 12l11 2"/></svg></div>
  <div class="ic two"><svg width="24" height="24"><path fill="#4a7ba0" d="M1 6h23l-8 13H1z"/><path fill="#efa800" d="M0 9.500h14l-3 5H0z"/></svg></div>
  <div class="ic"><svg width="24" height="24"><path fill="#b9d3d8" stroke="#8a9a9a" d="M3.500.5h17v23h-17z"/><path fill="#f3d9a0" stroke="#c89a50" d="M6.500 3.500h11v5h-11z"/><path stroke="#6b9fb5" stroke-width="2" stroke-dasharray="2 1.500" d="M6 13h12M6 17h12M6 21h12"/></svg></div>
  <div class="ic"><svg width="24" height="24"><ellipse cx="10" cy="9" rx="8" ry="8" fill="#8a7f72"/><ellipse cx="10" cy="7" rx="7.500" ry="6.500" fill="#efe4d2" stroke="#b8302a"/><path stroke="#6b6458" stroke-width="1.500" d="M8 5l8 10M13 4l0 11"/><g fill="none" stroke="#2a7fc0" stroke-width="1.700"><ellipse cx="13" cy="19" rx="2" ry="3.500"/><ellipse cx="19" cy="16" rx="2" ry="3" transform="rotate(-40 19 16)"/></g></svg></div>
  <div class="ic"><svg width="24" height="24"><path fill="#faebd2" stroke="#1f70ad" stroke-width="2" d="M1 1h22v22H1z"/><text x="3" y="18.500" class="ui" fill="#1f70ad">Ui</text></svg></div>
  <div class="ic"><svg width="24" height="24"><path fill="#c9c0ae" d="M1 1l18-1 3 14-17 4z"/><path fill="#1414c8" d="M3 3l15-1 2 11-13 2z"/><path fill="#5a7af0" d="M12 2h6l1 6z"/><ellipse cx="9" cy="20" rx="5" ry="3" fill="#a39b89"/><circle cx="17" cy="18" r="5.500" fill="#d5ccba"/><path fill="none" stroke="#4da32f" stroke-width="1.300" d="M14 19l3-2M17 19l3-2"/></svg></div>
  <div class="ic one"><svg width="24" height="24"><path fill="#1f70ad" d="M0 0h24v24H0z"/><text x="3" y="18.500" class="ui" fill="#faebd2">Ui</text></svg></div>
  <div class="ic one"><svg width="24" height="24"><path fill="#faebd2" stroke="#1f70ad" stroke-width="2" d="M1 1h22v22H1z"/><text x="3" y="18.500" class="ui" fill="#1f70ad">Ui</text></svg></div>
  <div class="ic xl"><svg width="24" height="24"><path fill="#faebd2" stroke="#1f7244" d="M12 3.500h11v17H12z"/><path stroke="#1f7244" stroke-width="1.500" d="M14 7h8M14 10h8M14 13h8M14 16h8M18 4v16"/><path fill="#1f7244" d="M1 3l13-3v24L1 21z"/><path stroke="#faebd2" stroke-width="2" d="M5 8l5 8M10 8l-5 8"/></svg></div>
</template>
<template id="tray">
  <svg width="124" height="40" viewBox="1680 0 124 40" fill="none" stroke="#faebd2" stroke-width="1.300"><path d="M1681 23l5.500-6 5.500 6"/><ellipse cx="1711" cy="20" rx="7" ry="7" fill="#efb04a" stroke="none"/><path fill="#7088a8" stroke="none" d="M1704 20c2-3 5-2 7 0 3 3 4 5 5 3-2 6-12 5-12-3z"/><path fill="#faebd2" stroke="none" d="M1732 16h10v9h-10zM1742 18h1v5h-1z"/><path d="M1728 14v2M1732 14v2M1727 17h6v3l-2 2v3h-2"/><path d="M1754 15h13v9h-13M1760 24v3M1756 27.500h8M1751.500 14h4v4h-4zM1753.500 18v6"/><path d="M1775.500 13.500h22v12h-22z"/><path stroke-dasharray="1.500 1" d="M1778 16.500h18M1778 19.500h18"/><path d="M1779 22.500h15"/></svg>
  <div class="clock">11:09 AM<br>7/11/2019</div>
  <svg width="50" height="40" viewBox="1870 0 50 40"><path fill="#faebd2" d="M1879 12h16v12h-8l-4 4v-4h-4z"/><path stroke="#222" d="M1882 15.500h10M1882 18.500h10"/><circle cx="1894" cy="27" r="8" fill="#2c2a27" stroke="#6b6458"/><text x="1891" y="31" font-family="Open Sans, sans-serif" font-size="11" fill="#faebd2">1</text><path stroke="#57524a" d="M1915.500 0v40"/></svg>
</template>
<script src="app.js"></script>
</body>
</html>
```
FILE: styles.css
```css
* { box-sizing: border-box; }
body { margin: 0; background: #000; font-family: "Open Sans", "Noto Sans", sans-serif; font-size: 11.3px; line-height: 16px; color: #1c1a17; }
svg { display: block; flex: none; overflow: visible; }
.defs { position: absolute; }
.desk { position: relative; width: 3917px; height: 2160px; overflow: hidden; background: #000; }
.monitor { position: absolute; width: 1920px; height: 1080px; display: flex; flex-direction: column; }
.mon-excel { left: 0; top: 0; }
.mon-files { left: 1997px; top: 0; }
.mon-sap { left: 968px; top: 1080px; }
.right { margin-left: auto; }
span, b, em { white-space: nowrap; }
.c { display: inline-block; flex: none; width: 0; height: 0; border: 3px solid transparent; border-top-color: #4a453e; border-bottom: 0; }
.c.upc { border-top: 0; border-bottom: 3px solid #8f8776; }
.c.in { margin-left: 3px; vertical-align: 3px; }

/* Excel window */
.excel { height: 1040px; display: flex; flex-direction: column; background: #696157; }
.xl-top { height: 59px; background: #423d36; color: #f0e2ca; position: relative; }
.xl-clouds { position: absolute; right: 0; top: 0; overflow: hidden; }
.xl-title { display: flex; height: 35px; position: relative; }
.xl-name { width: 1560px; padding: 10px 0 0 692px; }
.xl-tabs { display: grid; grid-template-columns: 63px 60px 59px 92px 78px 54px 65px 55px 83px 31px 800px 391px 89px; height: 24px; line-height: 24px; position: relative; align-items: stretch; justify-content: start; text-align: center; }
.xl-tabs span:first-child { padding-right: 5px; }
.xl-tabs .on { background: #ada48f; color: #26231e; }
.xl-tabs svg { margin-left: 10px; }
.xl-tabs .tell { text-align: left; padding-left: 1px; color: #9c9483; font-size: 11.400px; }
.xl-tabs .user { text-align: right; }
.xl-tabs .share { display: flex; align-items: center; gap: 3px; width: 63px; height: 23px; margin-left: 10px; padding: 0 0 0 6px; background: #2f2b26; color: #faebd2; }
.xl-tabs .share svg { margin: 0; }

.ribbon { height: 93px; background: #ada48f; display: flex; color: #26231e; }
.grp { position: relative; height: 93px; display: flex; align-items: flex-start; flex: none; }
.grp::after { content: ""; position: absolute; right: 0; top: 4px; height: 84px; width: 1px; background: #8f8776; }
.grp em { position: absolute; left: 0; right: 16px; bottom: 1px; text-align: center; font-style: normal; color: #332f2a; }
.ln { position: absolute; right: 5px; bottom: 5px; width: 7px; height: 7px; border: solid #4a453e; border-width: 1px 0 0 1px; }
.ln::after { content: ""; position: absolute; right: 0; bottom: 0; width: 4px; height: 4px; border: solid #26231e; border-width: 0 1.500px 1.500px 0; background: linear-gradient(45deg, transparent 40%, #26231e 40% 60%, transparent 60%); }
.big { display: flex; flex-direction: column; align-items: center; padding-top: 7px; text-align: center; }
.big b { font-weight: 400; margin-top: 1px; line-height: 16px; }
.big > .c { margin-top: 6px; }
.list { display: flex; flex-direction: column; padding-top: 3px; }
.list span { display: flex; align-items: center; gap: 3px; height: 23px; }
.list .c { margin-left: 7px; }
.list .c.in { margin-left: 2px; }
.g-clip { width: 158px; } .g-clip .paste { width: 50px; }
.g-clip em { right: 18px; }
.g-font { width: 207px; flex-direction: column; padding: 11px 0 0 0; }
.boxes { display: flex; padding-left: 4px; height: 23px; }
.box { display: flex; align-items: center; justify-content: space-between; border: 1px solid #7d7566; background: #d0c3ad; height: 23px; padding: 0 4px 0 3px; }
.b1 { width: 112px; } .b2 { width: 43px; }
.b3 { width: 131px; }
.r2 { margin-top: 5px; }
.g-align { width: 264px; }
.list.wide { padding: 8px 0 0 7px; gap: 1px; }
.list.wide span { height: 30px; gap: 2px; }
.list.wide .c { margin-left: 10px; }
.g-num { width: 140px; flex-direction: column; padding-top: 11px; }
.g-styles { width: 689px; } .g-styles em { right: 3px; }
.w80 { width: 80px; } .w54 { width: 54px; }
.gallery { display: flex; width: 547px; height: 62px; margin-top: 6px; border: 1px solid #696157; background: #d0c3ad; }
.tiles { display: grid; grid-template-columns: repeat(5, 100px); grid-auto-rows: 22px; gap: 6px; padding: 5px 0 0 3px; width: 531px; font-size: 12.500px; }
.t { padding-left: 4px; line-height: 21px; background: #faebd2; }
.normal { outline: 3px solid #8f8776; color: #000; }
.bad { background: #efb5a8; color: #8c0008; }
.good { background: #c6dda8; color: #006100; }
.neutral { background: #f5d87c; color: #8f5c00; }
.calc { background: #ecdfc6; color: #e07a0a; font-weight: 600; border: 1px solid #7d7566; line-height: 19px; padding-left: 3px; letter-spacing: -.300px; }
.check { background: #a39b89; color: #faebd2; font-weight: 600; border: 3px double #3f3b35; line-height: 15px; padding-left: 1px; letter-spacing: -.300px; }
.expl { color: #7d7566; font-style: italic; }
.input { background: #efba78; color: #4a4668; border: 1px solid #7d7566; line-height: 19px; padding-left: 3px; }
.linked { color: #e07a0a; border-bottom: 3px double #e07a0a; }
.note { background: #f8e9a0; color: #000; border: 1px solid #aea48f; line-height: 19px; padding-left: 3px; }
.gscroll { display: grid; grid-template-rows: 20px 20px 20px; width: 14px; border-left: 1px solid #7d7566; }
.gscroll span { display: flex; align-items: center; justify-content: center; background: #c9bda8; border-bottom: 1px solid #7d7566; }
.gscroll .more { border-bottom: 0; }
.gscroll .more .c { border-top-color: #111; }
.g-cells { width: 136px; padding-left: 1px; } .g-cells em { right: 2px; }
.w48 { width: 48px; } .w38 { width: 38px; } .w46 { width: 46px; } .w44 { width: 44px; } .w42 { width: 42px; }
.g-edit { width: 187px; padding-left: 7px; } .g-edit em { right: 0; }
.g-edit .list { width: 88px; }
.g-edit .ml { margin-left: 9px; }
.g-webex { width: 99px; } .g-webex em { right: 0; }
.fold { margin-left: auto; }

.fx { height: 46px; display: flex; padding: 10px 5px 0; }
.fx > * { height: 26px; }
.fx span { border: 1px solid #423d36; background: #ada48f; display: flex; align-items: center; }
.nm { width: 102px; padding: 0 6px; justify-content: space-between; color: #4a453e; }
.nm .c { border-width: 4px 4px 0; border-top-color: #7d7566; }
.fxb { width: 110px; }
.bar { flex: 1; margin-left: 3px; justify-content: flex-end; }

.sheet { height: 792px; display: flex; }
.sheet-main { width: 1899px; }
.cols { display: flex; height: 20px; overflow: hidden; border-bottom: 1px solid #8f8776; }
.corner { width: 26px; flex: none; border-right: 1px solid #b0a694; }
.cols span:not(.corner) { width: 64px; flex: none; text-align: center; border-right: 1px solid #b0a694; color: #f5e7ce; font-size: 12.500px; line-height: 21px; }
.cols .cur { background: #26231e !important; box-shadow: inset 0 -2px #28703a; }
.sheet-body { display: flex; height: 772px; }
.rows { width: 26px; overflow: hidden; flex: none; border-right: 1px solid #8f8776; }
.rows span { display: block; height: 20px; border-bottom: 1px solid #b0a694; text-align: center; color: #f5e7ce; font-size: 12.500px; line-height: 20px; }
.rows .cur { background: #26231e; box-shadow: inset -2px 0 #28703a; }
.cells { position: relative; flex: 1; background-color: #faebd2; background-image: linear-gradient(to right, transparent 63px, #cfc3ad 63px), linear-gradient(transparent 19px, #cfc3ad 19px); background-size: 64px 100%, 100% 20px; }
.row { display: flex; height: 20px; font-size: 13.100px; line-height: 21px; color: #000; }
.cell { width: 64px; height: 19px; padding-left: 2px; overflow: hidden; }
.cell.clip { width: 63px; margin-right: 1px; }
.cell.span2 { width: 127px; background: #faebd2; }
.cell.num { text-align: right; padding-right: 3px; }
.noted { background: linear-gradient(135deg, #d20000 4px, transparent 4px); font-size: 12.700px; }
.sel { position: absolute; left: 126px; top: 78px; width: 67px; height: 23px; border: 2px solid #28703a; }
.sel::after { content: ""; position: absolute; right: -4px; bottom: -4px; width: 6px; height: 6px; background: #28703a; border: solid #faebd2; border-width: 1px 0 0 1px; }
.vs { width: 15px; margin: 2px 0 0 3px; display: flex; flex-direction: column; height: 790px; }
.sb { display: flex; align-items: center; justify-content: center; width: 15px; height: 15px; border: 1px solid #3a362f; background: #958d7d; flex: none; }
.sb .c, .sb .upc { border-top-color: #26231e; border-bottom-color: #26231e; border-left-width: 4px; border-right-width: 4px; }
.thumb { background: #958d7d; border: 1px solid #3a362f; }
.track { background: #524e47; }
.vs .thumb { height: 737px; }
.vs .track { flex: 1; }

.tabs { height: 29px; display: flex; border-top: 1px solid #8f8776; border-bottom: 1px solid #423d36; color: #f5e7ce; font-size: 12.300px; }
.tabs > span { height: 22px; margin-top: 3px; line-height: 21px; text-align: center; border-left: 1px solid #958d7d; width: 84px; letter-spacing: -.150px; }
.tabs .act { width: 85px; height: 25px; margin-top: -1px; line-height: 28px; background: #faebd2; color: #28703a; font-weight: 700; border-bottom: 2px solid #28703a; border-left: 0; letter-spacing: -.350px; padding-right: 2px; }
.tabs .z { width: 88px; border-left: 0; border-right: 1px solid #958d7d; }
.plus { margin: 3px 0 0 31px; }
.dots { margin: 8px 0 0 743px; }
.hs { display: flex; margin: 6px 0 0 14px; }
.hs .thumb { width: 675px; height: 15px; }
.hs .track { width: 25px; height: 15px; }
.c.lf { border: 4px solid transparent !important; border-left: 0 !important; border-right-color: #26231e !important; }
.c.rt { border: 4px solid transparent !important; border-right: 0 !important; border-left-color: #26231e !important; }
.status { height: 21px; display: flex; background: #57524a; color: #faebd2; }
.status span { width: 58px; padding-left: 7px; line-height: 21px; }
.status svg { margin-top: 3px; }
.status .views { margin: 0 0 0 auto; }

/* File Explorer window */
.files { height: 1040px; background: #faebd2; display: flex; flex-direction: column; color: #1c1a17; }
.f-title { height: 23px; display: flex; color: #99907f; line-height: 24px; }
.f-title span { padding-left: 5px; }
.f-tabs { height: 24px; display: flex; line-height: 24px; border-bottom: 1px solid #d3c6b0; color: #3a3630; text-align: center; }
.f-tabs span { width: 59px; }
.f-tabs .sh { width: 58px; }
.f-tabs .vw { width: 54px; }
.f-tabs .file { width: 56px; background: #2a71b0; color: #faebd2; }
.f-nav { height: 38px; display: flex; border-bottom: 1px solid #b5aa96; margin: 0 1px 0 0; }
.addr { width: 1589px; height: 22px; margin-top: 6px; border: 1px solid #d3c6b0; display: flex; }
#crumbs { display: flex; margin: 0; padding: 0; list-style: none; line-height: 20px; font-size: 11.300px; }
#crumbs li { padding-right: 22.300px; white-space: nowrap; }
#crumbs li:not(:last-child)::after { content: ""; display: inline-block; width: 5px; height: 5px; border: solid #6b6458; border-width: 1.500px 1.500px 0 0; transform: rotate(45deg); margin: 0 -13px 1px 8px; }
#crumbs .w0 { width: 17px; padding: 0; }
#crumbs .w0::after { margin: 0 0 1px 1px !important; }
.search { width: 202px; height: 22px; margin: 6px 0 0 12px; border: 1px solid #d3c6b0; display: flex; align-items: center; justify-content: space-between; padding: 0 8px; color: #6b6458; }
.f-main { flex: 1; display: flex; }
.tree { width: 159px; border-right: 1px solid #f0e2ca; padding-top: 16px; }
.tree div { display: flex; align-items: center; height: 24px; gap: 5px; padding-left: 24px; width: 156px; overflow: hidden; white-space: nowrap; color: #000; }
.tree .k { padding-left: 32px; }
.tree .gap2 { margin-top: 8px; }
.tree .on { background: #d5c8b2; }
.flist { width: 600px; }
.fh { display: flex; height: 25px; line-height: 26px; color: #5b6478; }
.fh span:not(.ck) { width: 120px; padding-left: 6px; border-right: 1px solid #ddd0b9; }
.fh .h1 { width: 238px !important; padding-left: 0 !important; display: flex; }
.fh .h1 svg { margin: 0 0 0 72px; }
.fh .h4 { width: 80px !important; }
.ck { width: 13px; height: 13px; border: 1.500px solid #332f2a; flex: none; }
.fh .ck { margin: 6px 10px 0 12px; }
.fr { display: flex; align-items: center; height: 22px; width: 574px; margin: 6px 0 0 15px; padding-left: 4px; background: #d5c8b2; color: #7d7566; }
.fr > svg { margin-left: 1px; }
.fr .ck { background: #faebd2; }
.fr .n { margin-left: 3px; width: 225px; color: #000; }
.fr .d { width: 120px; } .fr .ty { width: 130px; } .fr .sz { width: 56px; text-align: right; }
.f-status { height: 22px; display: flex; line-height: 22px; font-size: 11px; }
.f-status span:first-child { width: 68px; padding-left: 15px; }

/* SAP window */
.sap { height: 1040px; border-top: 3px solid #bed4cc; background: #eddfc6; border-right: 1px solid #d3c6b0; padding: 0 3px 0 4px; display: flex; flex-direction: column; font-family: "DejaVu Sans Condensed", "DejaVu Sans", sans-serif; font-stretch: condensed; color: #57524a; }
.s-title { height: 28px; margin: 0 -3px 0 -4px; display: flex; border-bottom: 2px solid #d9ccb3; font-size: 16px; letter-spacing: .250px; line-height: 23px; color: #99907f; }
.s-tool { height: 39px; display: flex; border-bottom: 1px solid #d9ccb3; }
.combo { width: 142px; height: 24px; margin-top: 9px; border: 1.500px solid #b5aa96; background: #faebd2; display: flex; align-items: center; justify-content: flex-end; padding-right: 4px; }
.s-head { height: 31px; background: #f4e6cd; border-bottom: 1px solid #d9ccb3; font-size: 16px; letter-spacing: .250px; line-height: 31px; padding-left: 15px; }
.s-menu { height: 33px; background: #f4e6cd; border-bottom: 1px solid #d9ccb3; font-size: 13.200px; line-height: 33px; padding-left: 30px; }
.s-body { flex: 1; padding: 52px 0 0 3px; display: flex; flex-direction: column; gap: 2px; background: linear-gradient(#faebd2, #faebd2 4%, rgba(250,235,210,0)), linear-gradient(135deg, #c0d3c9 25%, #f4ead3 25% 50%, #c0d3c9 50% 75%, #f4ead3 75%); background-size: 100% 100%, 4px 4px; }
.fld { display: flex; height: 20px; width: 244px; font-size: 11.800px; color: #1414dc; }
.fld span { width: 168px; border-bottom: 1px solid #b5aa96; line-height: 22px; padding-left: 2px; }
.fld b { width: 76px; border: 1px solid #b5aa96; background: #faebd2; font: 400 12px/18px "DejaVu Sans Mono", monospace; letter-spacing: -.200px; padding-left: 2px; color: #b00c0c; }
.fld .ro { width: 34px; background: #e6dcc4; color: #3f7488; }
.s-status { height: 28px; margin-right: -3px; border-top: 1px solid #d9ccb3; display: flex; align-items: center; color: #1c1a17; padding: 0 3px 1px 5px; font-size: 12.400px; }
.s-status span { margin-left: 6px; width: 188px; }
.logo { margin-left: 725px; }

/* Taskbar */
.taskbar { height: 40px; background: #000; display: flex; }
.ic { width: 49px; height: 40px; flex: none; display: flex; align-items: center; justify-content: center; background-repeat: no-repeat; background-position: 4px 38px; }
.ic.s { width: 48px; }
.first { margin-left: 2px; }
.one { background-image: linear-gradient(to right, #f6c861 40px, transparent 40px); }
.two { background-image: linear-gradient(to right, #f6c861 31px, #c4a258 31px 40px, transparent 40px); }
.xl { background-color: #35302b; background-image: linear-gradient(to right, #f6c861 44px, #c4a258 44px); background-position: 0 38px; box-shadow: inset -4px 0 #25221e; width: 48px; margin-left: 1px; }
.ui { font: 600 17px "Open Sans", sans-serif; }
.traybox { margin-left: auto; display: flex; color: #faebd2; }
.clock { width: 66px; text-align: center; line-height: 18px; padding-top: 2px; letter-spacing: -.150px; }
.traybox.plain .clock { padding-top: 1px; }
```
FILE: app.js
```js
// Column letters A..AC, then the cut-off last column.
const cols = document.getElementById('cols');
for (let i = 0; i < 30; i++) {
  const s = document.createElement('span');
  s.textContent = i < 26 ? String.fromCharCode(65 + i) : i < 29 ? 'A' + String.fromCharCode(39 + i) : '';
  if (i === 2) s.className = 'cur';
  cols.appendChild(s);
}
const rows = document.getElementById('rows');
for (let r = 1; r <= 39; r++) {
  const s = document.createElement('span');
  s.textContent = r;
  if (r === 5) s.className = 'cur';
  rows.appendChild(s);
}
// Every monitor carries the same taskbar; only the main one has the full tray.
document.querySelectorAll('.taskbar').forEach(bar => {
  bar.appendChild(document.getElementById('tb').content.cloneNode(true));
  const box = document.createElement('div');
  box.className = 'traybox';
  if (bar.dataset.tray === 'full') {
    box.appendChild(document.getElementById('tray').content.cloneNode(true));
  } else {
    box.className += ' plain';
    box.innerHTML = '<div class="clock">11:09 AM<br>7/11/2019</div>';
  }
  bar.appendChild(box);
});
```
